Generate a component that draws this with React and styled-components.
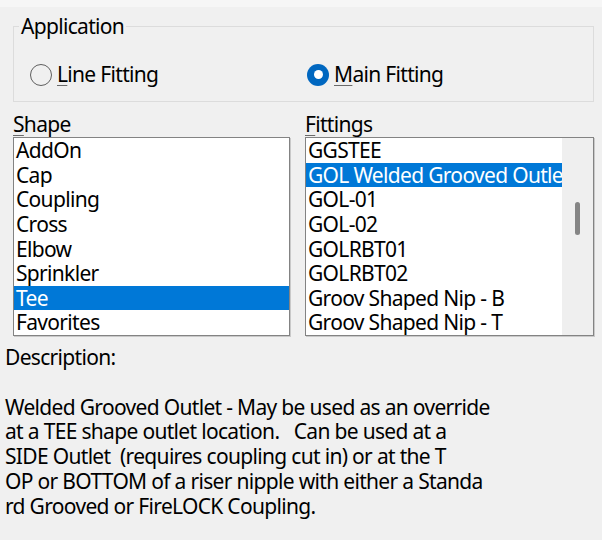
import React from 'react';
import styled, { createGlobalStyle } from 'styled-components';

const Global = createGlobalStyle`
  html, body { margin: 0; padding: 0; background: #f0f0f0; }
  body {
    font-family: "Noto Sans", "Open Sans", sans-serif;
    font-size: 21px;
    letter-spacing: -0.68px;
    color: #000;
  }
  #root { width: 602px; height: 540px; overflow: hidden; }
`;

const Page = styled.div`
  width: 602px;
  height: 540px;
  display: flex;
  flex-direction: column;
  background: #f0f0f0;
`;

const TopStrip = styled.div`
  height: 7px;
  background: #f6f6f6;
`;

const GroupBox = styled.div`
  position: relative;
  box-sizing: border-box;
  margin: 19px 8px 0 13px;
  height: 76px;
  border: 1px solid #dcdcdc;
  padding: 35px 0 0 16px;
`;

const Legend = styled.span`
  position: absolute;
  left: 5px;
  top: -13px;
  padding: 0 2px;
  line-height: 25px;
  background: #f0f0f0;
`;

const RadioRow = styled.div`
  display: grid;
  grid-template-columns: 277px auto;
  align-items: center;
`;

const RadioItem = styled.label`
  display: flex;
  align-items: center;
  gap: 5px;
  line-height: 25px;
`;

const RadioCircle = styled.span`
  box-sizing: border-box;
  width: 22px;
  height: 22px;
  border-radius: 50%;
  display: flex;
  align-items: center;
  justify-content: center;
  border: ${p => (p.$checked ? '0' : '1.5px solid #5f5f5f')};
  background: ${p => (p.$checked ? '#0067c0' : '#f0f0f0')};
  &::after {
    content: '';
    display: ${p => (p.$checked ? 'block' : 'none')};
    width: 9px;
    height: 9px;
    border-radius: 50%;
    background: #fff;
  }
`;

const Accel = styled.span`
  text-decoration: underline;
  text-decoration-color: #6a6a6a;
  text-underline-offset: 3px;
  text-decoration-thickness: 1px;
`;

const Lists = styled.div`
  display: grid;
  grid-template-columns: 277px 289px;
  column-gap: 15px;
  margin: 10px 0 0 13px;
`;

const ListColumn = styled.div`
  display: flex;
  flex-direction: column;
`;

const ListLabel = styled.div`
  line-height: 25px;
  height: 25px;
`;

const ListBox = styled.div`
  box-sizing: border-box;
  height: 199px;
  border: 1px solid #838383;
  box-shadow: 1px 1px 0 #c9c9c9;
  background: #fff;
  display: flex;
  overflow: hidden;
`;

const Items = styled.div`
  flex: 1;
  min-width: 0;
  display: flex;
  flex-direction: column;
`;

const Item = styled.div`
  height: 24.625px;
  line-height: 24.625px;
  padding-left: 2px;
  white-space: nowrap;
  overflow: hidden;
  background: ${p => (p.$selected ? '#0078d7' : 'transparent')};
  color: ${p => (p.$selected ? '#fff' : '#000')};
`;

const ScrollTrack = styled.div`
  width: 31px;
  background: #efefef;
  display: flex;
  justify-content: center;
  padding-top: 64px;
  box-sizing: border-box;
`;

const Thumb = styled.div`
  width: 5px;
  height: 33px;
  border-radius: 3px;
  background: #858585;
`;

const Description = styled.div`
  margin: 9px 0 0 5px;
  line-height: 24.75px;
`;

const DescBody = styled.div`
  margin-top: 24.75px;
  white-space: pre;
`;

const shapes = ['AddOn', 'Cap', 'Coupling', 'Cross', 'Elbow', 'Sprinkler', 'Tee', 'Favorites'];
const fittings = [
  'GGSTEE',
  'GOL Welded Grooved Outlet',
  'GOL-01',
  'GOL-02',
  'GOLRBT01',
  'GOLRBT02',
  'Groov Shaped Nip - B',
  'Groov Shaped Nip - T',
];

const descLines = [
  'Welded Grooved Outlet - May be used as an override',
  'at a TEE shape outlet location.   Can be used at a',
  'SIDE Outlet  (requires coupling cut in) or at the T',
  'OP or BOTTOM of a riser nipple with either a Standa',
  'rd Grooved or FireLOCK Coupling.',
];

export default function App() {
  return (
    <>
      <Global />
      <Page>
        <TopStrip />
        <GroupBox>
          <Legend>Application</Legend>
          <RadioRow>
            <RadioItem>
              <RadioCircle />
              <span><Accel>L</Accel>ine Fitting</span>
            </RadioItem>
            <RadioItem>
              <RadioCircle $checked />
              <span><Accel>M</Accel>ain Fitting</span>
            </RadioItem>
          </RadioRow>
        </GroupBox>
        <Lists>
          <ListColumn>
            <ListLabel><Accel>S</Accel>hape</ListLabel>
            <ListBox>
              <Items>
                {shapes.map(s => (
                  <Item key={s} $selected={s === 'Tee'}>{s}</Item>
                ))}
              </Items>
            </ListBox>
          </ListColumn>
          <ListColumn>
            <ListLabel><Accel>F</Accel>ittings</ListLabel>
            <ListBox>
              <Items>
                {fittings.map(s => (
                  <Item key={s} $selected={s.startsWith('GOL Welded')}>{s}</Item>
                ))}
              </Items>
              <ScrollTrack>
                <Thumb />
              </ScrollTrack>
            </ListBox>
          </ListColumn>
        </Lists>
        <Description>
          <div>Description:</div>
          <DescBody>{descLines.join('\n')}</DescBody>
        </Description>
      </Page>
    </>
  );
}
